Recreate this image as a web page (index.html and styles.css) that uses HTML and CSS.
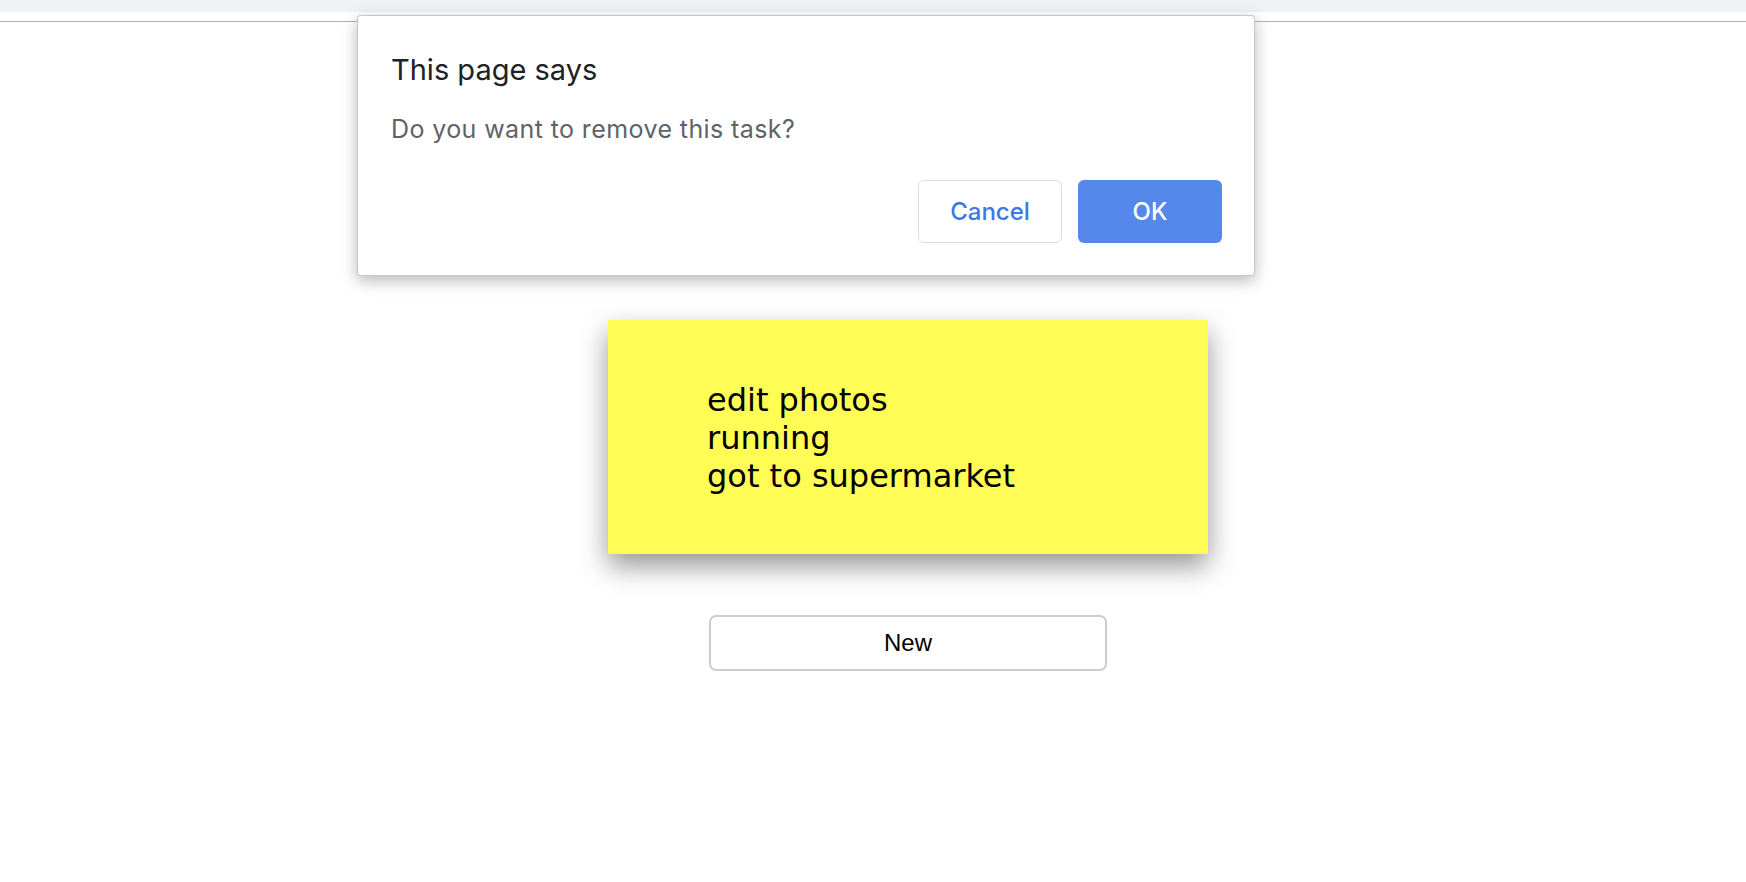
FILE: index.html
```html
<!DOCTYPE html>
<html lang="en">
<head>
<meta charset="utf-8">
<title>Tasks</title>
<link rel="stylesheet" href="styles.css">
</head>
<body>
<div class="toolbar"></div>
<div class="divider"></div>
<main class="page">
  <ul class="note">
    <li>edit photos</li>
    <li>running</li>
    <li>got to supermarket</li>
  </ul>
  <button class="new-btn" type="button">New</button>
</main>
<div class="dialog" role="alertdialog">
  <h1 class="dialog-title">This page says</h1>
  <p class="dialog-msg">Do you want to remove this task?</p>
  <div class="dialog-actions">
    <button class="btn btn-cancel" type="button">Cancel</button>
    <button class="btn btn-ok" type="button">OK</button>
  </div>
</div>
</body>
</html>
```
FILE: styles.css
```css
html, body {
  margin: 0;
  padding: 0;
  background: #ffffff;
}
body {
  width: 1746px;
  height: 882px;
  overflow: hidden;
  position: relative;
}
.toolbar {
  height: 12px;
  background: #f0f1f3;
}
.divider {
  height: 9px;
  border-bottom: 1px solid #b3b3b3;
  background: #ffffff;
}
.page {
  display: flex;
  flex-direction: column;
  align-items: center;
  padding-left: 70px;
  padding-top: 298px;
}
.note {
  list-style: none;
  margin: 0;
  box-sizing: border-box;
  width: 600px;
  height: 234px;
  padding: 61px 0 0 99px;
  background: #fffc55;
  font-family: "DejaVu Sans", Verdana, sans-serif;
  font-size: 32px;
  line-height: 38px;
  color: #000;
  box-shadow: 0 12px 26px rgba(0, 0, 0, 0.42);
}
.new-btn {
  margin-top: 61px;
  width: 398px;
  height: 56px;
  background: #ffffff;
  border: 2px solid #cdcdcd;
  border-radius: 7px;
  font-family: "Liberation Sans", Arial, sans-serif;
  font-size: 24px;
  color: #000;
  padding: 0;
}
.dialog {
  position: absolute;
  left: 357px;
  top: 15px;
  width: 898px;
  box-sizing: border-box;
  padding: 36px 32px 32px 33px;
  background: #ffffff;
  border: 1px solid rgba(0, 0, 0, 0.22);
  border-radius: 4px;
  box-shadow: 0 5px 16px rgba(0, 0, 0, 0.28);
  font-family: Inter, "Noto Sans", sans-serif;
}
.dialog-title {
  margin: 0;
  font-size: 29px;
  font-weight: 400;
  color: #202124;
  line-height: 36px;
}
.dialog-msg {
  margin: 26px 0 0;
  font-size: 25px;
  letter-spacing: 0.4px;
  color: #5f6368;
  line-height: 30px;
}
.dialog-actions {
  display: flex;
  justify-content: flex-end;
  gap: 16px;
  margin-top: 36px;
}
.btn {
  width: 144px;
  height: 63px;
  border-radius: 6px;
  font-family: Inter, "Noto Sans", sans-serif;
  font-size: 24px;
  font-weight: 500;
  padding: 0;
}
.btn-cancel {
  background: #ffffff;
  border: 1px solid #dadce0;
  color: #3b78e7;
}
.btn-ok {
  background: #5688ec;
  border: none;
  color: #ffffff;
}
```
